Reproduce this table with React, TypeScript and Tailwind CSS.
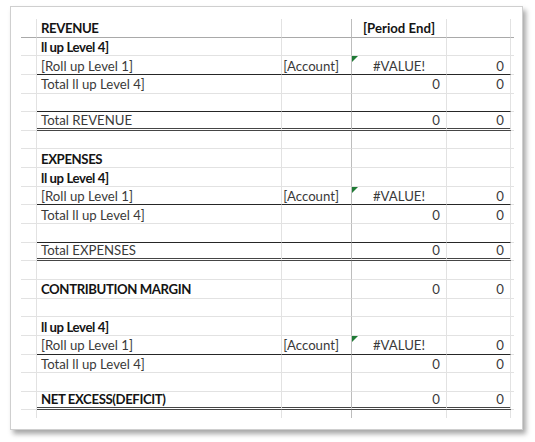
import React from "react";

type Row = {
  b?: string;
  bold?: boolean;
  c?: string;
  d?: string;
  dCenter?: boolean;
  dBold?: boolean;
  e?: string;
  border?: "single" | "double" | "freeze";
  tri?: boolean;
};

const rows: Row[] = [
  { b: "REVENUE", bold: true, d: "[Period End]", dCenter: true, dBold: true, border: "freeze" },
  { b: "ll up Level 4]", bold: true },
  { b: "[Roll up Level 1]", c: "[Account]", d: "#VALUE!", dCenter: true, e: "0", border: "single", tri: true },
  { b: "Total ll up Level 4]", d: "0", e: "0" },
  { border: "single" },
  { b: "Total REVENUE", d: "0", e: "0", border: "double" },
  {},
  { b: "EXPENSES", bold: true },
  { b: "ll up Level 4]", bold: true },
  { b: "[Roll up Level 1]", c: "[Account]", d: "#VALUE!", dCenter: true, e: "0", border: "single", tri: true },
  { b: "Total ll up Level 4]", d: "0", e: "0" },
  { border: "single" },
  { b: "Total EXPENSES", d: "0", e: "0", border: "double" },
  {},
  { b: "CONTRIBUTION MARGIN", bold: true, d: "0", e: "0" },
  {},
  { b: "ll up Level 4]", bold: true },
  { b: "[Roll up Level 1]", c: "[Account]", d: "#VALUE!", dCenter: true, e: "0", border: "single", tri: true },
  { b: "Total ll up Level 4]", d: "0", e: "0" },
  {},
  { b: "NET EXCESS(DEFICIT)", bold: true, d: "0", e: "0", border: "double" },
];

function bottomClass(border: Row["border"]) {
  if (border === "single") return "border-b border-b-[#262626]";
  if (border === "double") return "border-b-[3px] border-double border-b-[#454545]";
  if (border === "freeze") return "border-b border-b-[#a9a9a9]";
  return "border-b border-b-[#e2e2e2]";
}

const boldCls = "font-bold text-[#141414] text-[13.2px] tracking-[-0.4px]";
const regCls = "text-[#3a3a3a] text-[13.2px]";

function RowView({ r }: { r: Row }) {
  const main = bottomClass(r.border);
  const side = r.border === "freeze" ? "border-b border-b-[#a9a9a9]" : "border-b border-b-[#e2e2e2]";
  return (
    <div className="flex h-[18.65px] leading-none">
      <div className={`w-[16px] shrink-0 border-r border-r-[#e2e2e2] ${side}`} />
      <div
        className={`w-[245px] shrink-0 border-r border-r-[#e2e2e2] ${main} flex items-end pb-[1px] pl-[4px] whitespace-nowrap ${
          r.bold ? boldCls : regCls
        }`}
      >
        {r.b}
      </div>
      <div
        className={`w-[70px] shrink-0 border-r border-r-[#bdbdbd] ${main} flex items-end justify-end pb-[1px] pr-[12px] whitespace-nowrap ${regCls}`}
      >
        {r.c}
      </div>
      <div
        className={`relative w-[95px] shrink-0 border-r border-r-[#e2e2e2] ${main} flex items-end pb-[1px] whitespace-nowrap ${
          r.dCenter ? "justify-center" : "justify-end pr-[6px]"
        } ${r.dBold ? "font-bold text-[#141414] text-[13.2px]" : regCls}`}
      >
        {r.tri && (
          <div className="absolute left-0 top-0 h-0 w-0 border-t-[6px] border-r-[6px] border-t-[#1f7a35] border-r-transparent" />
        )}
        {r.d}
      </div>
      <div
        className={`w-[64px] shrink-0 border-r border-r-[#e2e2e2] ${main} flex items-end justify-end pb-[1px] pr-[6px] ${regCls}`}
      >
        {r.e}
      </div>
      <div className={`w-[3px] shrink-0 ${side}`} />
    </div>
  );
}

export default function App() {
  return (
    <div
      className="w-[535px] h-[442px] bg-white overflow-hidden"
      style={{ fontFamily: "Lato, 'Liberation Sans', sans-serif" }}
    >
      <div className="ml-[10px] mt-[6px] w-[513px] h-[424px] bg-white border border-[#cfcfcf] shadow-[3px_4px_5px_rgba(0,0,0,0.35)] pt-[12px] pl-[10px]">
        <div className="flex flex-col">
          {rows.map((r, i) => (
            <RowView key={i} r={r} />
          ))}
          <div className="flex h-[8px]">
            <div className="w-[16px] shrink-0 border-r border-r-[#e2e2e2]" />
            <div className="w-[245px] shrink-0 border-r border-r-[#e2e2e2]" />
            <div className="w-[70px] shrink-0 border-r border-r-[#bdbdbd]" />
            <div className="w-[95px] shrink-0 border-r border-r-[#e2e2e2]" />
            <div className="w-[64px] shrink-0 border-r border-r-[#e2e2e2]" />
          </div>
        </div>
      </div>
    </div>
  );
}
